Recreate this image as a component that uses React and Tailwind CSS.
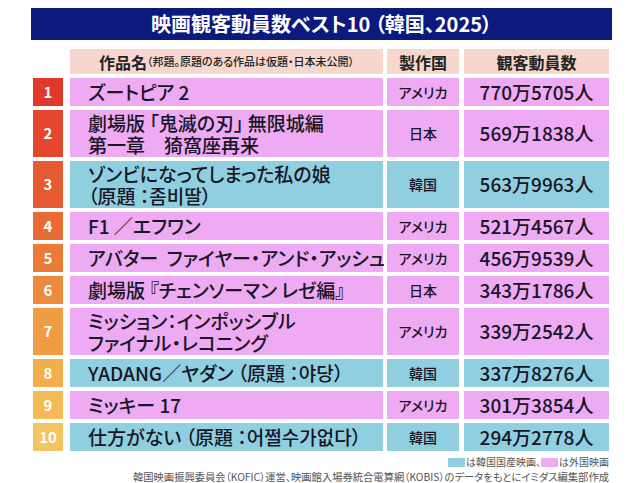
const rows = [
  { rank: 1, title: ['ズートピア 2'], country: 'アメリカ', count: '770万5705人', kr: false, badge: 'bg-[#e0382b]' },
  { rank: 2, title: ['劇場版 「鬼滅の刃」 無限城編', '第一章\u3000猗窩座再来'], country: '日本', count: '569万1838人', kr: false, badge: 'bg-[#e2462d]' },
  { rank: 3, title: ['ゾンビになってしまった私の娘', '（原題 ：좀비딸）'], country: '韓国', count: '563万9963人', kr: true, badge: 'bg-[#e65a31]' },
  { rank: 4, title: ['F1 ／エフワン'], country: 'アメリカ', count: '521万4567人', kr: false, badge: 'bg-[#e96b34]' },
  { rank: 5, title: ['アバター  ファイヤー・アンド・アッシュ'], country: 'アメリカ', count: '456万9539人', kr: false, badge: 'bg-[#eb7b37]' },
  { rank: 6, title: ['劇場版 『チェンソーマン レゼ編』'], country: '日本', count: '343万1786人', kr: false, badge: 'bg-[#ee8b3b]' },
  { rank: 7, title: ['ミッション：インポッシブル', 'ファイナル・レコニング'], country: 'アメリカ', count: '339万2542人', kr: false, badge: 'bg-[#f09c43]' },
  { rank: 8, title: ['YADANG／ヤダン （原題 ：야당）'], country: '韓国', count: '337万8276人', kr: true, badge: 'bg-[#f2ad4d]' },
  { rank: 9, title: ['ミッキー 17'], country: 'アメリカ', count: '301万3854人', kr: false, badge: 'bg-[#f3ba56]' },
  { rank: 10, title: ['仕方がない （原題 ：어쩔수가없다）'], country: '韓国', count: '294万2778人', kr: true, badge: 'bg-[#f3c45f]' },
];

function Row({ row }) {
  const bg = row.kr ? 'bg-[#90cfe0]' : 'bg-[#eeaaf2]';
  const tall = row.title.length > 1;
  return (
    <div className={`flex ${tall ? 'h-[47px]' : 'h-[28px]'}`}>
      <div className={`w-[30px] ${row.badge} flex items-center justify-center text-white font-bold text-[15px]`}>
        {row.rank}
      </div>
      <div className={`ml-[7px] w-[313px] ${bg} flex flex-col justify-center pl-[18px] text-[19px] leading-[22px] text-[#161626] font-medium`}>
        {row.title.map((t) => (
          <div key={t} className="whitespace-pre">{t}</div>
        ))}
      </div>
      <div className={`ml-[4px] w-[72px] ${bg} flex items-center justify-center text-[14px] text-[#161626] font-medium`}>
        {row.country}
      </div>
      <div className={`ml-[5px] w-[145px] ${bg} flex items-center justify-center text-[19px] text-[#161626] font-medium`}>
        {row.count}
      </div>
    </div>
  );
}

export default function App() {
  return (
    <div className="w-[640px] h-[483px] overflow-hidden bg-white pt-[8px] pl-[31px] font-['Noto_Sans_CJK_JP',sans-serif] [font-feature-settings:'palt']">
      <div className="w-[581px] h-[32px] bg-[#0b1a7c] flex items-center justify-center text-white font-bold text-[20px] whitespace-pre">
        映画観客動員数ベスト10 （韓国、2025）
      </div>
      <div className="mt-[9px] ml-[2px] flex flex-col gap-[4px]">
        <div className="flex h-[25px] text-[#222]">
          <div className="w-[30px]" />
          <div className="ml-[7px] w-[313px] bg-[#f7d6cd] flex items-center justify-center">
            <span className="text-[16px] font-bold">作品名</span>
            <span className="text-[11px] font-medium">（邦題。原題のある作品は仮題・日本未公開）</span>
          </div>
          <div className="ml-[4px] w-[72px] bg-[#f7d6cd] flex items-center justify-center text-[16px] font-bold">
            製作国
          </div>
          <div className="ml-[5px] w-[145px] bg-[#f7d6cd] flex items-center justify-center text-[16px] font-bold">
            観客動員数
          </div>
        </div>
        {rows.map((r) => (
          <Row key={r.rank} row={r} />
        ))}
      </div>
      <div className="w-[578px] mt-[5px] flex justify-end items-center text-[10px] leading-[12px] text-[#555]">
        <span className="w-[17px] h-[9px] bg-[#90cfe0] mr-[1px]" />
        <span>は韓国国産映画、</span>
        <span className="w-[17px] h-[9px] bg-[#eeaaf2] mr-[1px]" />
        <span>は外国映画</span>
      </div>
      <div className="w-[578px] mt-[3px] text-right text-[10.3px] leading-[12px] text-[#555] whitespace-nowrap">
        韓国映画振興委員会（KOFIC）運営、映画館入場券統合電算網（KOBIS）のデータをもとにイミダス編集部作成
      </div>
    </div>
  );
}
